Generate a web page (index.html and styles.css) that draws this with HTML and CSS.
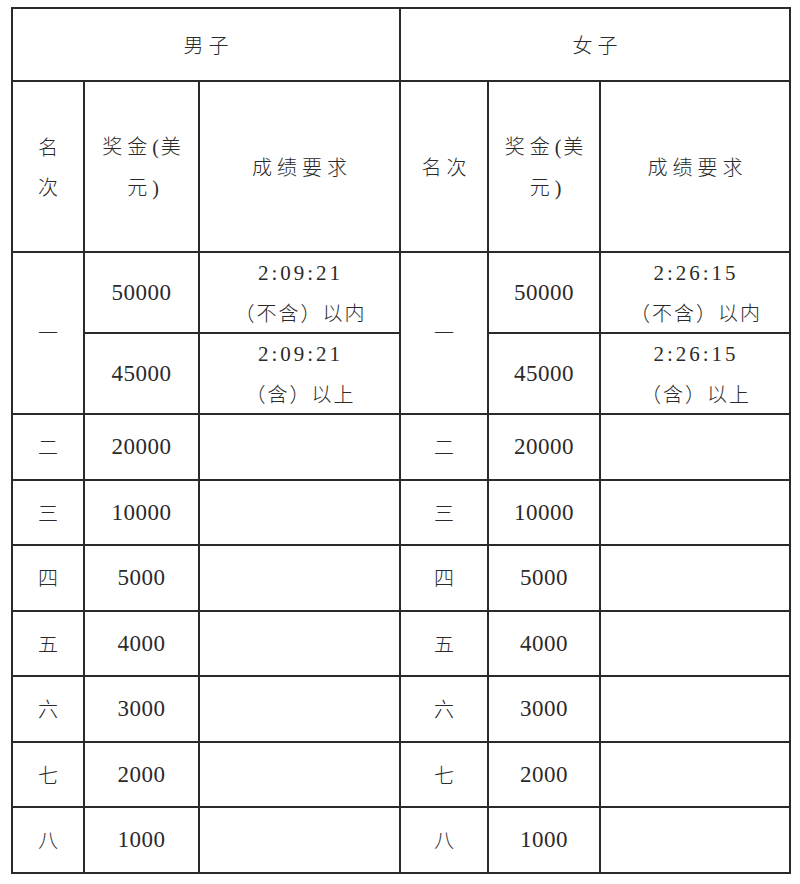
FILE: index.html
```html
<!DOCTYPE html>
<html lang="zh-CN">
<head>
<meta charset="utf-8">
<title>奖金</title>
<link rel="stylesheet" href="styles.css">
</head>
<body>
<table class="prize">
  <colgroup>
    <col class="c-rank">
    <col class="c-prize">
    <col class="c-req">
    <col class="c-rank2">
    <col class="c-prize2">
    <col class="c-req2">
  </colgroup>
  <tr class="r-head">
    <th colspan="3" class="wide">男子</th>
    <th colspan="3" class="wide">女子</th>
  </tr>
  <tr class="r-sub">
    <th class="wide">名<br>次</th>
    <th class="wide">奖金<span class="lat">(</span>美<br>元<span class="lat">)</span></th>
    <th class="wide">成绩要求</th>
    <th class="wide">名次</th>
    <th class="wide">奖金<span class="lat">(</span>美<br>元<span class="lat">)</span></th>
    <th class="wide">成绩要求</th>
  </tr>
  <tr class="r-half">
    <td rowspan="2" class="rank">一</td>
    <td class="num">50000</td>
    <td class="req"><div class="time">2:09:21</div><div class="cond">（不含）以内</div></td>
    <td rowspan="2" class="rank">一</td>
    <td class="num">50000</td>
    <td class="req"><div class="time">2:26:15</div><div class="cond">（不含）以内</div></td>
  </tr>
  <tr class="r-half">
    <td class="num">45000</td>
    <td class="req"><div class="time">2:09:21</div><div class="cond">（含）以上</div></td>
    <td class="num">45000</td>
    <td class="req"><div class="time">2:26:15</div><div class="cond">（含）以上</div></td>
  </tr>
  <tr class="r-a"><td class="rank">二</td><td class="num">20000</td><td></td><td class="rank">二</td><td class="num">20000</td><td></td></tr>
  <tr class="r-b"><td class="rank">三</td><td class="num">10000</td><td></td><td class="rank">三</td><td class="num">10000</td><td></td></tr>
  <tr class="r-a"><td class="rank">四</td><td class="num">5000</td><td></td><td class="rank">四</td><td class="num">5000</td><td></td></tr>
  <tr class="r-b"><td class="rank">五</td><td class="num">4000</td><td></td><td class="rank">五</td><td class="num">4000</td><td></td></tr>
  <tr class="r-a"><td class="rank">六</td><td class="num">3000</td><td></td><td class="rank">六</td><td class="num">3000</td><td></td></tr>
  <tr class="r-b"><td class="rank">七</td><td class="num">2000</td><td></td><td class="rank">七</td><td class="num">2000</td><td></td></tr>
  <tr class="r-a"><td class="rank">八</td><td class="num">1000</td><td></td><td class="rank">八</td><td class="num">1000</td><td></td></tr>
</table>
</body>
</html>
```

FILE: styles.css
```css
html, body {
  margin: 0;
  padding: 0;
  background: #ffffff;
}

body {
  font-family: "Noto Sans CJK SC", sans-serif;
  color: #2a2a2a;
}

.prize {
  margin: 7px 0 0 11px;
  border-collapse: collapse;
  table-layout: fixed;
  width: 778px;
}

.c-rank { width: 72px; }
.c-prize { width: 115px; }
.c-req { width: 201px; }
.c-rank2 { width: 88px; }
.c-prize2 { width: 112px; }
.c-req2 { width: 190px; }

.prize th,
.prize td {
  border: 2px solid #2a2a2a;
  padding: 0;
  text-align: center;
  vertical-align: middle;
  font-weight: 300;
  font-size: 20px;
  line-height: 40px;
}

.prize th.wide {
  letter-spacing: 5px;
  padding-left: 5px;
}

.lat {
  font-family: "Liberation Serif", serif;
  font-weight: 400;
  letter-spacing: 2px;
}

.r-head { height: 73px; }
.r-sub { height: 171px; }
.r-half { height: 81px; }
.r-a { height: 66px; }
.r-b { height: 65px; }

.prize td.num {
  font-family: "Liberation Serif", serif;
  font-size: 23px;
  font-weight: 400;
  letter-spacing: 0.5px;
  line-height: 30px;
}

.prize td.req {
  line-height: 39px;
  letter-spacing: 2px;
  padding: 0 0 0 2px;
}

.time {
  font-family: "Liberation Serif", serif;
  font-weight: 400;
  font-size: 21px;
  letter-spacing: 3px;
  line-height: 39px;
  height: 39px;
}

.cond {
  line-height: 39px;
  height: 39px;
}

.prize td.rank {
  font-size: 20px;
  line-height: 30px;
}
```
